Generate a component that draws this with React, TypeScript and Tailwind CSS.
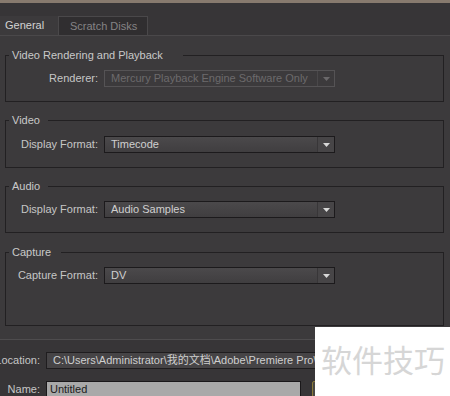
import { ReactNode } from "react";

type Row = {
  label: string;
  value: string;
  disabled?: boolean;
};

type Group = {
  title: string;
  rows: Row[];
  gapClass: string;
  legendClass: string;
  bodyClass: string;
};

const groups: Group[] = [
  {
    title: "Video Rendering and Playback",
    rows: [
      {
        label: "Renderer:",
        value: "Mercury Playback Engine Software Only",
        disabled: true,
      },
    ],
    gapClass: "mt-0",
    legendClass: "pr-[20px]",
    bodyClass: "pt-[8px] pb-[14px]",
  },
  {
    title: "Video",
    rows: [{ label: "Display Format:", value: "Timecode" }],
    gapClass: "mt-[11px]",
    legendClass: "pr-[8px]",
    bodyClass: "pt-[9px] pb-[14px]",
  },
  {
    title: "Audio",
    rows: [{ label: "Display Format:", value: "Audio Samples" }],
    gapClass: "mt-[11px]",
    legendClass: "pr-[8px]",
    bodyClass: "pt-[8px] pb-[14px]",
  },
  {
    title: "Capture",
    rows: [{ label: "Capture Format:", value: "DV" }],
    gapClass: "mt-[12px]",
    legendClass: "pr-[10px]",
    bodyClass: "pt-[8px] pb-[41px]",
  },
];

function Arrow({ disabled }: { disabled?: boolean }) {
  return (
    <svg width="7" height="4" viewBox="0 0 7 4" aria-hidden="true">
      <path d="M0 0h7L3.5 4z" fill={disabled ? "#6a686a" : "#d8d8d8"} />
    </svg>
  );
}

function Dropdown({ value, disabled }: { value: string; disabled?: boolean }) {
  return (
    <div
      className={`flex h-[17px] w-[231px] border ${
        disabled
          ? "border-[#555355] bg-[#3c3a3c] text-[#6c6a6c]"
          : "border-[#1c1a1c] bg-gradient-to-b from-[#4b494b] to-[#403e40] text-[#d0d0d0]"
      }`}
    >
      <div className="flex flex-1 items-center overflow-hidden whitespace-nowrap pl-[6px]">
        {value}
      </div>
      <div
        className={`flex w-[17px] items-center justify-center border-l ${
          disabled ? "border-[#4a484a]" : "border-[#383638] bg-[#474547]"
        }`}
      >
        <Arrow disabled={disabled} />
      </div>
    </div>
  );
}

function GroupBox({ group }: { group: Group }) {
  return (
    <fieldset
      className={`${group.gapClass} w-[439px] border border-[#222022] pl-[3px] pr-[3px] ${group.bodyClass}`}
    >
      <legend
        className={`pl-[3px] ${group.legendClass} leading-[14px] text-[#c9c9c9]`}
      >
        {group.title}
      </legend>
      {group.rows.map((row) => (
        <div key={row.label} className="flex items-center gap-[6px]">
          <div className="w-[89px] text-right text-[#c6c6c6]">{row.label}</div>
          <Dropdown value={row.value} disabled={row.disabled} />
        </div>
      ))}
    </fieldset>
  );
}

function FieldRow({ label, children }: { label: string; children: ReactNode }) {
  return (
    <div className="flex items-center gap-[6px]">
      <div className="flex w-[40px] shrink-0 justify-end whitespace-nowrap text-[#c6c6c6]">
        <span className="shrink-0">{label}</span>
      </div>
      {children}
    </div>
  );
}

export default function App() {
  return (
    <div className="relative h-[396px] w-[450px] overflow-hidden bg-[#373537] font-['Liberation_Sans','Noto_Sans_CJK_SC',sans-serif] text-[11px]">
      <div className="h-[3px] bg-[#877a6e]" />
      <div className="h-[14px]" />

      {/* tabs */}
      <div className="flex h-[19px] items-end border-b border-[#4a484a]">
        <div className="flex h-[19px] w-[58px] items-center bg-[#3c3a3c] pl-[5px] text-[#d2d2d2]">
          General
        </div>
        <div className="flex h-[19px] w-[90px] items-center border border-b-0 border-[#4a484a] bg-[#302e30] pl-[11px] text-[#858385]">
          Scratch Disks
        </div>
      </div>

      {/* general panel */}
      <div className="h-[304px] border-b border-[#4e4c4e] bg-[#3c3a3c] px-[5px] pt-[12px]">
        {groups.map((g) => (
          <GroupBox key={g.title} group={g} />
        ))}
      </div>

      {/* location / name */}
      <div className="pt-[12px]">
        <FieldRow label="Location:">
          <div className="flex h-[17px] w-[380px] shrink-0 items-center whitespace-nowrap border border-[#1f1d1f] bg-[#464446] pl-[6px] text-[#cfcfcf]">
            C:\Users\Administrator\我的文档\Adobe\Premiere Pro\5.5
          </div>
        </FieldRow>
        <div className="mt-[12px]">
          <FieldRow label="Name:">
            <div className="flex h-[17px] w-[255px] shrink-0 items-center border border-[#1a181a] bg-[#a9a9a9] pl-[3px] text-[#1c1c1c]">
              Untitled
            </div>
            <div className="ml-[5px] h-[17px] w-[20px] shrink-0 rounded-[2px] border border-[#8a7a3a] bg-[#4a4842]" />
          </FieldRow>
        </div>
      </div>

      {/* watermark */}
      <div className="absolute left-[315px] top-[327px] flex h-[69px] w-[135px] items-start bg-white pl-[6px] pt-[16px]">
        <span className="text-[31px] leading-none whitespace-nowrap text-[#d6d6d6] font-['Noto_Sans_CJK_SC',sans-serif]">
          软件技巧
        </span>
      </div>
    </div>
  );
}
